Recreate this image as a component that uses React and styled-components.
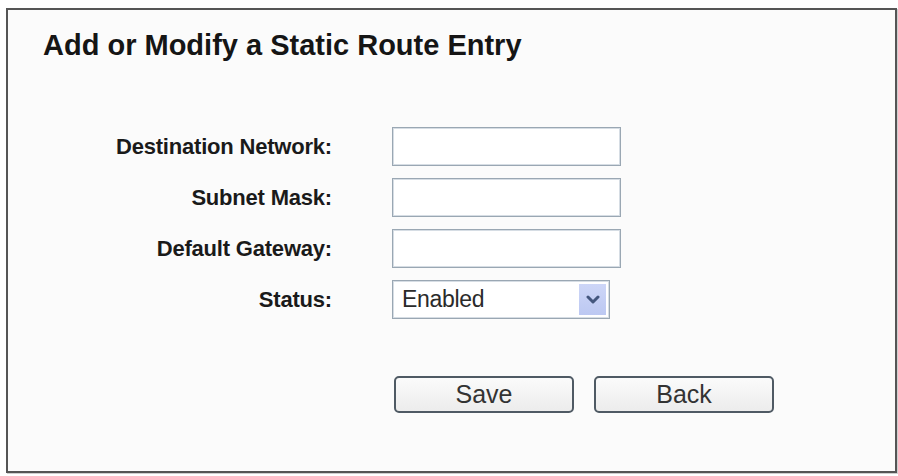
import React from "react";
import styled, { createGlobalStyle } from "styled-components";

const Global = createGlobalStyle`
  html, body { margin: 0; padding: 0; background: #ffffff; }
  body { font-family: "Liberation Sans", Arial, sans-serif; }
  #root { width: 898px; height: 476px; }
`;

const Page = styled.div`
  width: 898px;
  height: 476px;
  padding: 8px 1px 3px 6px;
  box-sizing: border-box;
  background: #ffffff;
`;

const Frame = styled.section`
  width: 100%;
  height: 100%;
  box-sizing: border-box;
  border: 2px solid #555555;
  background: #fbfbfb;
  box-shadow: 1px 1px 0 #cfcfcf;
  padding-top: 18px;
`;

const Title = styled.h1`
  margin: 0 0 0 35px;
  font-size: 29px;
  line-height: 34px;
  font-weight: 700;
  color: #151515;
`;

const Form = styled.div`
  margin-top: 65px;
  display: grid;
  grid-template-columns: 324px 229px;
  grid-auto-rows: 39px;
  column-gap: 60px;
  row-gap: 12px;
  align-items: center;
`;

const Label = styled.label`
  justify-self: end;
  font-size: 22px;
  font-weight: 700;
  letter-spacing: -0.2px;
  color: #1a1a1a;
`;

const TextInput = styled.input`
  width: 229px;
  height: 39px;
  box-sizing: border-box;
  border: 1px solid #9aa7b3;
  box-shadow: inset 0 0 0 1px #d6dde4;
  background: #ffffff;
  font-family: "Liberation Sans", Arial, sans-serif;
  font-size: 20px;
  padding: 0 8px;
  outline: none;
`;

const SelectBox = styled.div`
  width: 218px;
  height: 39px;
  box-sizing: border-box;
  border: 1px solid #9aa7b3;
  box-shadow: inset 0 0 0 1px #d6dde4;
  background: #ffffff;
  display: flex;
  align-items: center;
  padding: 3px 3px 3px 9px;
`;

const SelectText = styled.span`
  flex: 1;
  font-size: 23px;
  letter-spacing: -0.3px;
  color: #2a2a2a;
`;

const DropButton = styled.span`
  width: 27px;
  height: 31px;
  background: linear-gradient(#cdd6f7, #bcc8f2);
  display: flex;
  align-items: center;
  justify-content: center;
`;

const Actions = styled.div`
  margin: 57px 0 0 386px;
  display: flex;
  gap: 20px;
`;

const Button = styled.button`
  width: 180px;
  height: 37px;
  box-sizing: border-box;
  border: 2px solid #4f5a64;
  border-radius: 5px;
  background: linear-gradient(#fbfbfb, #ececec);
  font-family: "Liberation Sans", Arial, sans-serif;
  font-size: 25px;
  color: #333333;
  padding: 0;
  line-height: 1;
`;

const Chevron = () => (
  <svg width="14" height="10" viewBox="0 0 14 10">
    <path d="M2 2 L7 7 L12 2" fill="none" stroke="#44577e" strokeWidth="3" strokeLinecap="round" strokeLinejoin="round" />
  </svg>
);

export default function App() {
  return (
    <Page>
      <Global />
      <Frame>
        <Title>Add or Modify a Static Route Entry</Title>
        <Form>
          <Label>Destination Network:</Label>
          <TextInput type="text" />
          <Label>Subnet Mask:</Label>
          <TextInput type="text" />
          <Label>Default Gateway:</Label>
          <TextInput type="text" />
          <Label>Status:</Label>
          <SelectBox>
            <SelectText>Enabled</SelectText>
            <DropButton>
              <Chevron />
            </DropButton>
          </SelectBox>
        </Form>
        <Actions>
          <Button>Save</Button>
          <Button>Back</Button>
        </Actions>
      </Frame>
    </Page>
  );
}
